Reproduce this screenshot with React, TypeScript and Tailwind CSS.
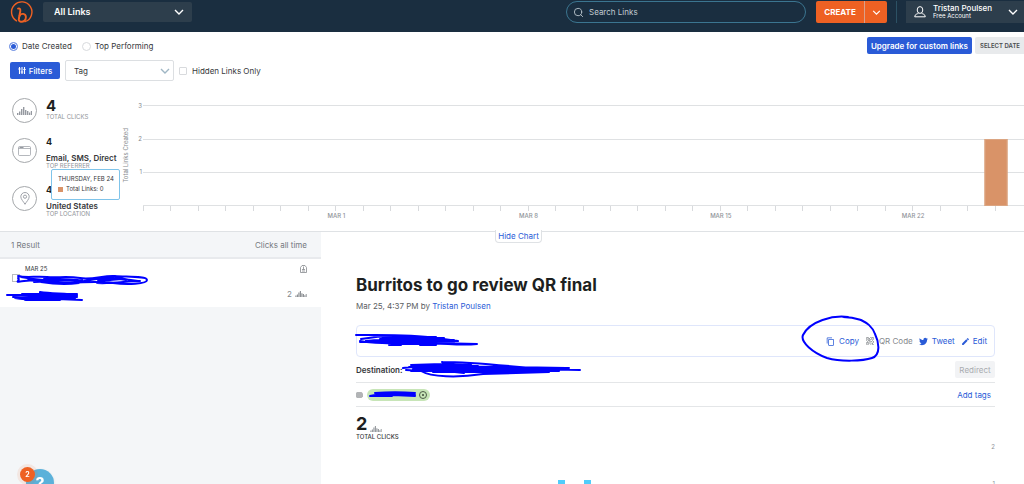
import React from 'react';
import { Search } from 'lucide-react';
import { FaTwitter } from 'react-icons/fa';
import { MdContentCopy, MdEdit, MdQrCode2 } from 'react-icons/md';

const days = Array.from({ length: 32 }, (_, i) => i);

const dayLabels: Record<number, string> = {
  7: 'MAR 1',
  14: 'MAR 8',
  21: 'MAR 15',
  28: 'MAR 22',
};

const detailBars = [0, 1];

const Chevron = ({ className }: { className: string }) => (
  <svg className={className} viewBox="0 0 10 6" fill="none" stroke="currentColor" aria-hidden="true">
    <path d="M1 1l4 4 4-4" strokeWidth="1.4" />
  </svg>
);

const Logo = () => (
  <svg className="size-6" viewBox="0 0 24 24" fill="none" stroke="#ee6123" strokeLinecap="round" aria-hidden="true">
    <path d="M6.500 20.800A10.200 10.200 0 1 1 15 21.700" strokeWidth="1.400" />
    <path d="M8 8.600c1.900-.5 2.500.3 2.300 2.400l-1.400 7.500" strokeWidth="1.900" />
    <path d="M9.600 15.800c1.500-2.800 6.200-2.600 6.300 1.200.1 3.200-2.600 5.200-5.100 4.700-2-.4-2.500-2-1.700-3.600" strokeWidth="1.900" />
  </svg>
);

const FilterIcon = () => (
  <svg className="h-[7px] w-2" viewBox="0 0 8 7" fill="none" stroke="currentColor" aria-hidden="true">
    <path d="M1.500 0v7M4 0v7M6.500 0v7M.3 2h2.400M2.800 5h2.400M5.300 2.500h2.400" strokeWidth="1.100" />
  </svg>
);

const Bars = ({ className }: { className: string }) => (
  <svg className={className} viewBox="0 0 15 8" fill="currentColor" aria-hidden="true">
    <path d="M0 6h1.400v2H0zM2 4.500h1.400V8H2zM4 2h1.400v6H4zM6 0h1.400v8H6zM8 3h1.400v5H8zM10 4h1.400v4H10zM12 5.500h1.200V8H12zM13.800 4H15v4h-1.200z" />
  </svg>
);

const BrowserIcon = () => (
  <svg className="h-[10px] w-[13px]" viewBox="0 0 13 10" fill="none" stroke="currentColor" aria-hidden="true">
    <rect x=".5" y=".5" width="12" height="9" rx="1" strokeWidth=".7" />
    <path d="M.5 2.500h12" strokeWidth=".7" />
    <path d="M1.500 1.500h4" strokeWidth="1" />
  </svg>
);

const PinIcon = () => (
  <svg className="h-[13px] w-[10px]" viewBox="0 0 10 13" fill="none" stroke="currentColor" strokeWidth=".9" aria-hidden="true">
    <path d="M5 12.300C3.800 10 .8 7.200.8 4.700a4.200 4.200 0 0 1 8.400 0C9.200 7.200 6.200 10 5 12.300z" />
    <circle cx="5" cy="4.700" r="1.600" />
  </svg>
);

const UserIcon = () => (
  <svg className="size-3" viewBox="0 0 12 12" fill="none" stroke="currentColor" aria-hidden="true">
    <ellipse cx="6" cy="4" rx="2.800" ry="3.400" />
    <path d="M4.500 7.200C3.500 8 .8 8 .7 10.800h10.600C11.200 8 8.500 8 7.500 7.200" strokeLinejoin="round" />
  </svg>
);

const Scribble = ({ className, viewBox, d }: { className: string; viewBox: string; d: string }) => (
  <svg
    className={`pointer-events-none absolute ${className}`}
    viewBox={viewBox}
    fill="none"
    stroke="#0000ff"
    strokeWidth={2}
    strokeLinecap="round"
    strokeLinejoin="round"
    aria-hidden="true"
  >
    <path d={d} />
  </svg>
);

const StatIcon = ({ children }: { children: React.ReactNode }) => (
  <div className="flex size-[25px] shrink-0 items-center justify-center rounded-full border border-[#a5a8ab] text-[#9599a0]">
    {children}
  </div>
);

export default function App() {
  return (
    <div className="relative flex h-screen flex-col overflow-hidden bg-white font-['Inter',sans-serif] text-[8px] leading-[10px] text-[#36383b]">
      <header className="flex h-8 shrink-0 items-start bg-[#1a2e40] text-white">
        <a href="#home" aria-label="Home" className="ml-[10px]">
          <Logo />
        </a>
        <div className="relative mt-[2px] ml-[9px] h-5 w-[149px]">
          <select aria-label="Group" className="h-full w-full appearance-none rounded-xs bg-[#2d3e4c] pl-[11px] text-[9px] font-semibold">
            <option>All Links</option>
          </select>
          <Chevron className="absolute top-[7px] right-2 h-[6px] w-[10px]" />
        </div>
        <div className="mt-px ml-auto flex h-[22px] w-60 items-center gap-[5px] rounded-full border border-[#3b7590] px-[6px]">
          <Search className="size-[11px] shrink-0 text-[#b8c3ca]" strokeWidth={2} />
          <input aria-label="Search Links" placeholder="Search Links" className="w-full bg-transparent text-[8px] outline-none placeholder:text-[#c3cbd1]" />
        </div>
        <div className="mt-px ml-[10px] flex h-[22px] overflow-hidden rounded-xs bg-[#ee6123]">
          <button className="w-[49px] border-r border-[#d9a08a] text-[8px] font-bold">CREATE</button>
          <button aria-label="More create options" className="flex w-[22px] items-center justify-center">
            <Chevron className="h-[5px] w-[9px]" />
          </button>
        </div>
        <div className="mt-px ml-[9px] h-[22px] w-px bg-[#2c5164]" />
        <button className="mt-px ml-[9px] flex h-[22px] w-[118px] items-center bg-[#2d3e4c] pl-2 text-left">
          <UserIcon />
          <span className="ml-[7px]">
            <span className="block text-[8px] leading-[8px] font-medium">Tristan Poulsen</span>
            <span className="block text-[6px] leading-[8px]">Free Account</span>
          </span>
          <Chevron className="ml-auto mr-[6px] h-[6px] w-[10px]" />
        </button>
      </header>

      <section className="relative h-[200px] shrink-0 border-b border-[#dfe2e5]">
        <div className="flex items-start justify-between pt-[5px]">
          <div className="flex gap-[10px] pt-1 pl-[9px]">
            <label className="flex items-center gap-1">
              <input type="radio" name="sort" defaultChecked className="size-[9px] appearance-none rounded-full border border-[#cfd4da] checked:border-[#7f9ce6] checked:bg-[#2a5bd7] checked:shadow-[inset_0_0_0_1px_white]" />
              Date Created
            </label>
            <label className="flex items-center gap-1">
              <input type="radio" name="sort" className="size-[9px] appearance-none rounded-full border border-[#d8dadd]" />
              Top Performing
            </label>
          </div>
          <div className="flex gap-[3px]">
            <button className="h-[17px] rounded-xs bg-[#2a5bd7] px-1 text-[8px] font-semibold text-white">Upgrade for custom links</button>
            <button className="h-[17px] rounded-l-xs bg-[#e8eaec] pr-1 pl-[5px] text-[6px] font-semibold text-[#4b4d50]">SELECT DATE</button>
          </div>
        </div>

        <div className="mt-[6px] flex items-center pl-[10px]">
          <button className="flex h-[17px] w-[50px] items-center justify-center gap-[3px] rounded-xs bg-[#2a5bd7] text-[8px] font-medium text-white">
            <FilterIcon />
            Filters
          </button>
          <div className="relative ml-[5px] h-[21px] w-[109px]">
            <select aria-label="Tag" className="h-full w-full appearance-none rounded-xs border border-[#dcdfe2] bg-white pl-2 text-[8px]">
              <option>Tag</option>
            </select>
            <Chevron className="absolute top-2 right-1 h-[6px] w-[10px] text-[#9fb6c4]" />
          </div>
          <label className="ml-[5px] flex items-center gap-[5px]">
            <input type="checkbox" className="size-2 appearance-none rounded-[1px] border border-[#d8dadd]" />
            Hidden Links Only
          </label>
        </div>

        {/* Summary and chart */}
        <div className="flex pt-[17px]">
          <div className="w-[121px] shrink-0 pl-3">
            <div className="flex h-[25px] gap-[9px]">
              <StatIcon><Bars className="h-2 w-[15px]" /></StatIcon>
              <div>
                <p className="text-[15px] leading-[15px] font-bold text-[#1d1f21]">4</p>
                <p className="text-[6px] leading-[8px] text-[#909499]">TOTAL CLICKS</p>
              </div>
            </div>
            <div className="mt-[15px] flex gap-[9px]">
              <StatIcon><BrowserIcon /></StatIcon>
              <div className="whitespace-nowrap">
                <p className="text-[9px] leading-[8px] font-bold text-[#1d1f21]">4</p>
                <p className="pt-2 text-[8px] leading-[8px] font-semibold">Email, SMS, Direct</p>
                <p className="text-[6px] leading-[8px] text-[#909499]">TOP REFERRER</p>
              </div>
            </div>
            <div className="mt-4 flex gap-[9px]">
              <StatIcon><PinIcon /></StatIcon>
              <div className="whitespace-nowrap">
                <p className="text-[9px] leading-[8px] font-bold text-[#1d1f21]">4</p>
                <p className="pt-2 text-[8px] leading-[8px] font-semibold">United States</p>
                <p className="text-[6px] leading-[8px] text-[#909499]">TOP LOCATION</p>
              </div>
            </div>
          </div>
          <div className="flex h-[115px] w-[9px] items-center justify-center">
            <span className="rotate-180 text-[6px] leading-[8px] whitespace-nowrap text-[#85898d] [writing-mode:vertical-rl]">Total Links Created</span>
          </div>
          <div className="w-3 pt-1 text-right text-[6px] leading-[8px] text-[#85898d]">
            <p className="h-[33px]">3</p>
            <p className="h-[33px]">2</p>
            <p>1</p>
          </div>
          <div className="ml-[1px] min-w-0 flex-1 pt-[7px]">
            <div className="h-[34px] border-t border-[#dfe1e3]" />
            <div className="h-[33px] border-t border-[#dfe1e3]" />
            <div className="h-[33px] border-t border-[#dfe1e3]" />
            <div className="flex border-t border-[#dfe1e3] pr-[2px]">
              {days.map((day) => (
                <div key={day} className="relative h-[5px] flex-1 border-l border-[#d8dadd]">
                  {dayLabels[day] && (
                    <span className="absolute top-[6px] left-0 -translate-x-1/2 text-[6px] leading-[8px] font-medium whitespace-nowrap text-[#909499]">
                      {dayLabels[day]}
                    </span>
                  )}
                  {day === 31 && <span className="absolute bottom-[5px] left-0 h-[67px] w-[23px] -translate-x-1/2 border border-[#dba582] bg-[#d99368]" />}
                </div>
              ))}
            </div>
          </div>
        </div>

        <div className="absolute top-[137px] left-[51px] h-[31px] w-[69px] rounded-xs border border-[#7fc4ea] bg-white px-[6px] pt-1 text-[6px] whitespace-nowrap">
          <p>THURSDAY, FEB 24</p>
          <p className="flex items-center gap-[3px]">
            <span className="size-[5px] bg-[#d99368]" />
            Total Links: 0
          </p>
        </div>
        <button className="absolute top-[198px] left-[495px] z-10 h-[13px] w-[47px] rounded-b-sm border border-t-0 border-[#dfe2e5] bg-white text-[8px] leading-[10px] whitespace-nowrap text-[#2a5bd7]">
          Hide Chart
        </button>
      </section>

      <div className="flex min-h-0 flex-1">
        <aside className="w-[321px] shrink-0 bg-[#f4f6f8]">
          <div className="flex h-[27px] items-center justify-between border-b-2 border-[#e8eaed] pr-[14px] pl-[11px] text-[#74797f]">
            <span>1 Result</span>
            <span>Clicks all time</span>
          </div>
          <div className="relative flex h-12 justify-between bg-white pt-[5px] pr-[14px] pl-3">
            <div>
              <p className="pl-[13px] text-[6px] leading-[10px]">MAR 25</p>
              <input type="checkbox" aria-label="Select link" className="block size-2 appearance-none border border-[#b9bcc0]" />
            </div>
            <div className="flex flex-col items-end justify-between pt-px pb-2 text-[#85898d]">
              <svg className="h-2 w-[7px]" viewBox="0 0 7 8" fill="none" stroke="currentColor" strokeWidth=".8" aria-hidden="true">
                <path d="M.5 2.500L2 .5h3l1.500 2v5h-6zM2 6h3M2 4.500h3M3.500 1.500v3" />
              </svg>
              <span className="flex items-center gap-[3px]">
                2
                <Bars className="h-[6px] w-3" />
              </span>
            </div>
            <Scribble
              className="top-[15px] left-4 h-3 w-[134px]"
              viewBox="0 0 134 12"
              d="M2 2c7 2 19 0 29 1s20-1 33 1 24-3 35-2 32 0 32 4-20 5-34 3-30-1-44 0-33-4-45-2S5 7 2 4M5 3c20 4 35 4 60 3M12 6h48M18 8l48-2M28 4l34 2-30 1M25 8c12 2 24 3 38 1M32 4c13 1 20 4 37 3M68 7c18-4 38-3 54 0M78 5c12-2 25-2 41 2M81 9c14 1 31-2 43-2M82 7l24-2M84 6c8-1 18-2 26 0"
            />
            <Scribble
              className="top-[31px] left-[5px] h-3 w-20"
              viewBox="0 0 80 12"
              d="M2 5h28M8 7c20 1 40 0 63-1M17 4h55M17 5l55 2M10 8c12 2 26 2 45 2M35 2c12 2 25 1 37 3M35 2v8M20 8h50M20 10h35M52 9l25 1M22 6h50"
            />
          </div>
        </aside>

        <main className="min-w-0 flex-1 pt-[43px] pr-[29px] pl-[35px]">
          <h1 className="text-[17px] leading-[20px] font-bold text-[#1d1f21]">Burritos to go review QR final</h1>
          <p className="mt-[6px] text-[#5b5e62]">
            Mar 25, 4:37 PM by <a href="#author" className="text-[#2a5bd7]">Tristan Poulsen</a>
          </p>
          <div className="relative mt-[14px] flex h-8 items-center justify-end gap-[6px] rounded-sm border border-[#dfe6fb] pr-[7px] text-[#2a5bd7]">
            <button className="flex items-center gap-1"><MdContentCopy className="size-[9px]" />Copy</button>
            <button className="flex items-center gap-1 text-[#85898d]"><MdQrCode2 className="size-[10px]" />QR Code</button>
            <button className="flex items-center gap-1"><FaTwitter className="size-[9px]" />Tweet</button>
            <button className="flex items-center gap-[3px]"><MdEdit className="size-[9px]" />Edit</button>
            <Scribble
              className="top-[6px] -left-[3px] h-4 w-[126px]"
              viewBox="0 0 126 16"
              d="M2 3c25 0 54-1 80 3l22 3-98 1M7 7c22-4 48-4 70 1M12 9c24-3 46 1 69 2l42 1c-22 2-36-2-56 0M6 9c14 3 27 1 39 3l49-2M35 12h46M35 13h12M66 13h16M25 10h75M27 8h73M34 6h56M28 5h54M26 7h60M30 9h70M30 11h66"
            />
            <Scribble
              className="-top-[11px] right-[114px] h-[48px] w-[80px]"
              viewBox="0 0 80 48"
              d="M48 2C33 0 10 6 3 20c-3 7 10 18 24 23 14 4 36 3 45 0 9-3 7-16 3-24-3-8-8-11-14-14-3-1-8-3-18-3"
            />
          </div>
          <div className="relative flex h-[26px] items-center justify-between border-b border-[#e4e6e8]">
            <span className="font-semibold">Destination:</span>
            <button disabled className="h-[17px] w-10 rounded-xs bg-[#f2f3f5] text-[8px] text-[#a9acb0]">Redirect</button>
            <Scribble
              className="top-[3px] left-[45px] h-[18px] w-[182px]"
              viewBox="0 0 182 18"
              d="M41 2c28 0 56 3 88 6M41 2c11 4 21 2 29 3M10 5l31-1 34 5M2 8c15-2 27-3 43-2l120 2M5 10c28 2 50-1 72-2l102 2M20 11c10 6 36 7 62 3l66-2M12 6h65M16 8h130M10 11h148M32 12h115M12 9h140M8 7l55 6M50 9l118-1"
            />
          </div>
          <div className="relative flex h-6 items-center justify-between border-b border-[#e4e6e8]">
            <div className="flex items-center gap-1">
              <svg className="h-[6px] w-[7px]" viewBox="0 0 7 6" fill="#b2b4b6" aria-hidden="true">
                <path d="M1 0h4.500L7 1.500v3L5.500 6H1L0 5V1z" />
              </svg>
              <span className="flex h-3 w-[63px] items-center justify-end rounded-full bg-[#c7e5b7] pr-[3px]">
                <button aria-label="Remove tag" className="flex size-2 items-center justify-center rounded-full border border-[#4d5b48]">
                  <span className="size-[2px] rounded-full bg-[#3c4738]" />
                </button>
              </span>
            </div>
            <button className="pr-1 text-[#2a5bd7]">Add tags</button>
            <Scribble
              className="top-[7px] left-[12px] h-[9px] w-[50px]"
              viewBox="0 0 50 9"
              d="M7 3c12-1 28-1 40 0M2 6c9-2 28-3 45-1M4 6h20M12 4h33M25 5l22 1"
            />
          </div>
          <div className="mt-2 flex items-end gap-[3px]">
            <span className="text-[18px] leading-[18px] font-bold text-[#1d1f21]">2</span>
            <Bars className="mb-px h-[6px] w-3 text-[#909499]" />
          </div>
          <p className="text-[6px] leading-[8px] font-medium">TOTAL CLICKS</p>
          <div className="mt-[2px] h-[60px] text-right text-[6px] leading-[8px] text-[#909499]">
            <p>2</p>
            <div className="flex items-start gap-[19px] pt-[29px] pl-[202px]">
              {detailBars.map((bar) => (
                <span key={bar} className="h-5 w-[7px] shrink-0 bg-[#50cdfb]" />
              ))}
              <span className="ml-auto">1</span>
            </div>
          </div>
        </main>
      </div>

      <button aria-label="Help, 2 new messages" className="fixed -bottom-[13px] left-[26px] size-7 rounded-full bg-[#5bb1da] text-[16px] font-bold text-white shadow-sm">
        <span className="block leading-[22px]">?</span>
        <span className="absolute -top-[2px] -left-[6px] flex size-[15px] items-center justify-center rounded-full bg-[#ee6123] text-[7px] ring-3 ring-[#ee6123]/10">2</span>
      </button>
    </div>
  );
}
